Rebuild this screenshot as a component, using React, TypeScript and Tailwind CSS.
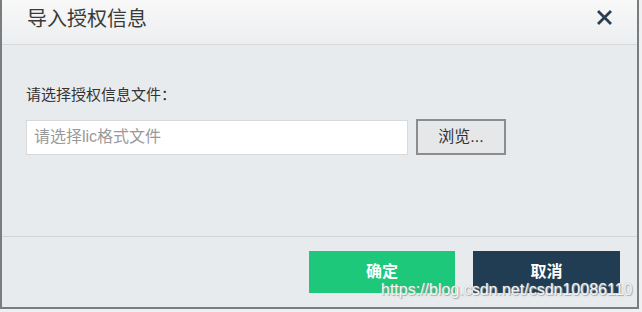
import React from 'react';

function App() {
  return (
    <div
      className="relative w-[642px] h-[312px] bg-[#eef0f1] overflow-hidden"
      style={{ fontFamily: '"Liberation Sans", "Noto Sans CJK SC", sans-serif' }}
    >
      <div className="flex flex-col w-[639px] h-[309px] bg-[#e8ebee] border-l-2 border-r-2 border-b-2 border-[#7a7d80]">
        {/* header */}
        <div className="flex items-center justify-between h-[45px] pl-[25px] pr-[24px] pb-[7px] bg-gradient-to-b from-[#f8f8f8] to-[#eceef0] border-b border-[#d6d9dc]">
          <span className="text-[20px] text-[#3a3a3a]">导入授权信息</span>
          <svg width="15" height="15" viewBox="0 0 15 15" className="mt-[-3px] mr-[1px]">
            <path d="M2 2 L13 13 M13 2 L2 13" stroke="#2b3e4f" strokeWidth="2.8" strokeLinecap="square" />
          </svg>
        </div>

        {/* body */}
        <div className="flex flex-col h-[192px] pl-[24px] pt-[40px] border-b border-[#d2d5d8]">
          <div className="text-[15px] text-[#333] leading-[20px]">请选择授权信息文件：</div>
          <div className="flex items-center gap-[8px] mt-[14px]">
            <div className="flex items-center w-[382px] h-[35px] bg-white border border-[#d9d9d9] px-[7px] text-[16px] text-[#9a9a9a]">
              请选择lic格式文件
            </div>
            <button className="w-[90px] h-[36px] bg-[#e6e7e8] border-2 border-[#8a8c8e] text-[16px] text-[#333]">
              浏览...
            </button>
          </div>
        </div>

        {/* footer */}
        <div className="flex justify-end gap-[18px] pt-[14px] pr-[17px]">
          <button className="w-[146px] h-[42px] bg-[#1ec87a] text-white text-[16px] font-bold">确定</button>
          <button className="w-[147px] h-[42px] bg-[#213d53] text-white text-[16px] font-bold">取消</button>
        </div>
      </div>

      {/* watermark */}
      <div
        className="absolute left-[381px] top-[281px] text-[16px] text-white/90 leading-[18px]"
        style={{ textShadow: '0 0 1px #999, 1px 1px 1px #aaa' }}
      >
        https://blog.csdn.net/csdn10086110
      </div>
    </div>
  );
}

export default App;
